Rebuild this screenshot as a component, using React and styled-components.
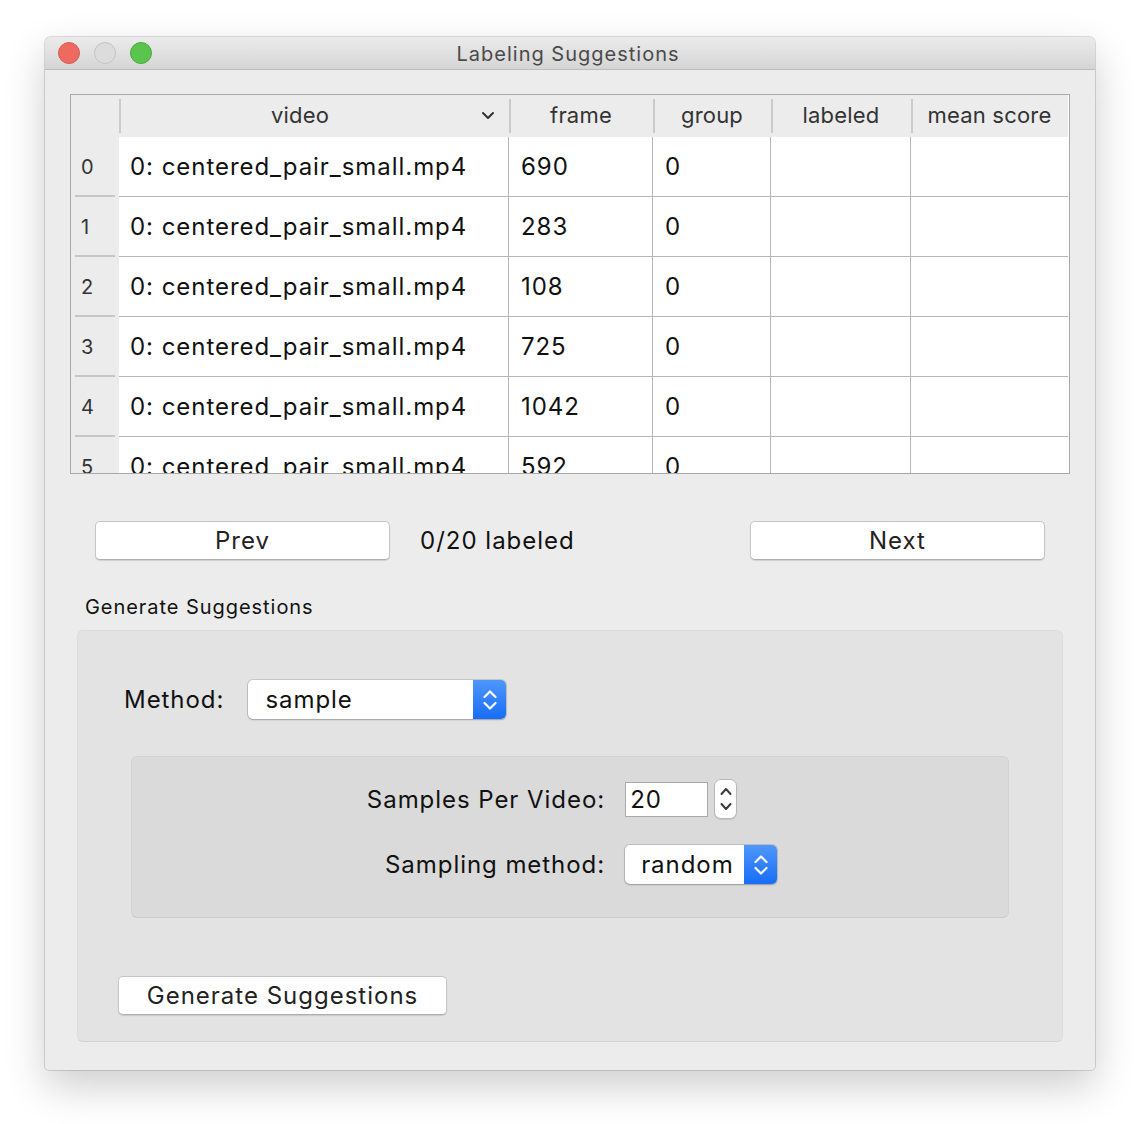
import React from 'react';
import styled, { createGlobalStyle } from 'styled-components';

const GlobalStyle = createGlobalStyle`
  html, body { margin: 0; padding: 0; background: #ffffff; }
  body { font-family: Inter, "Noto Sans", "Liberation Sans", sans-serif; color: #111; }
  * { box-sizing: border-box; }
`;

const Page = styled.div`
  width: 1140px;
  height: 1124px;
  padding: 37px 0 0 45px;
  background: #ffffff;
`;

const Window = styled.div`
  width: 1050px;
  height: 1033px;
  background: #ececec;
  border-radius: 6px 6px 4px 4px;
  box-shadow: 0 0 0 1px rgba(0, 0, 0, 0.13), 0 16px 40px rgba(0, 0, 0, 0.2);
  display: flex;
  flex-direction: column;
  overflow: hidden;
`;

const TitleBar = styled.div`
  flex: none;
  height: 33px;
  display: grid;
  grid-template-columns: 1fr auto 1fr;
  align-items: center;
  background: linear-gradient(#ebebeb, #d5d5d5);
  border-bottom: 1px solid #bcbcbc;
  padding: 0 13px;
`;

const Lights = styled.div`
  display: flex;
  gap: 14px;
`;

const Light = styled.span`
  width: 22px;
  height: 22px;
  border-radius: 50%;
  background: ${p => p.$bg};
  border: 1px solid ${p => p.$border};
`;

const Title = styled.div`
  font-size: 20px;
  color: #4a4a4a;
  letter-spacing: 1px;
  padding-top: 2px;
  padding-right: 4px;
`;

const Content = styled.div`
  flex: 1;
  display: flex;
  flex-direction: column;
  padding: 24px 25px 28px;
`;

const Table = styled.div`
  height: 380px;
  border: 1px solid #a8a8a8;
  background: #ffffff;
  overflow: hidden;
  display: grid;
  grid-template-columns: 48px 390px 144px 118px 140px 157px;
  grid-template-rows: 42px repeat(6, 60px);
`;

const Corner = styled.div`
  background: #ececec;
`;

const HeaderCell = styled.div`
  position: relative;
  background: #ececec;
  display: flex;
  align-items: center;
  justify-content: center;
  font-size: 22px;
  letter-spacing: 0.2px;
  color: #333;
  padding-right: ${p => (p.$sort ? '28px' : '0')};
  padding-bottom: 2px;
  &::before {
    content: '';
    position: absolute;
    left: 0;
    top: 4px;
    bottom: 4px;
    width: 2px;
    background: #cbcbcb;
  }
`;

const SortIcon = styled.svg`
  position: absolute;
  right: 14px;
  top: 16px;
`;

const RowHead = styled.div`
  position: relative;
  background: #ececec;
  display: flex;
  align-items: center;
  padding-left: 10px;
  font-size: 20px;
  color: #333;
  &::after {
    content: '';
    position: absolute;
    left: 4px;
    right: 4px;
    bottom: 0;
    height: 2px;
    background: #c6c6c6;
  }
`;

const Cell = styled.div`
  display: flex;
  align-items: center;
  padding-left: ${p => (p.$first ? '11px' : '12px')};
  font-size: 24px;
  letter-spacing: 0.95px;
  color: #111;
  border-bottom: 1px solid #b6b6b6;
  border-right: ${p => (p.$last ? 'none' : '1px solid #b6b6b6')};
  white-space: nowrap;
  overflow: hidden;
`;

const NavRow = styled.div`
  margin-top: 47px;
  display: grid;
  grid-template-columns: 295px 1fr 295px;
  column-gap: 30px;
  align-items: center;
  padding: 0 25px 0 25px;
`;

const PushButton = styled.button`
  height: 39px;
  width: ${p => p.$width || 'auto'};
  background: #ffffff;
  border: 1px solid #c6c6c6;
  border-bottom-color: #adadad;
  border-radius: 5px;
  box-shadow: 0 1px 1px rgba(0, 0, 0, 0.12);
  font-family: inherit;
  font-size: 24px;
  letter-spacing: 1px;
  color: #222;
  padding: 0;
`;

const Status = styled.div`
  font-size: 24px;
  letter-spacing: 1px;
  color: #111;
`;

const SectionTitle = styled.div`
  margin-top: 35px;
  padding-left: 15px;
  font-size: 20px;
  letter-spacing: 0.95px;
  line-height: 24px;
  color: #111;
`;

const GroupBox = styled.div`
  margin: 11px 7px 0;
  height: 412px;
  background: #e3e3e3;
  border: 1px solid #dcdcdc;
  border-bottom-color: #d3d3d3;
  border-radius: 6px;
  display: flex;
  flex-direction: column;
  align-items: flex-start;
  padding: 49px 53px 0 39px;
`;

const MethodRow = styled.div`
  display: flex;
  align-items: center;
  gap: 24px;
  padding-left: 7px;
`;

const Label = styled.span`
  font-size: 24px;
  letter-spacing: 0.95px;
  color: #111;
  text-align: right;
`;

const Combo = styled.div`
  width: ${p => p.$width};
  height: 39px;
  background: #ffffff;
  border-radius: 5px;
  box-shadow: 0 0 0 1px rgba(0, 0, 0, 0.12), 0 1px 2px rgba(0, 0, 0, 0.2);
  display: flex;
  align-items: stretch;
  overflow: hidden;
`;

const ComboText = styled.div`
  flex: 1;
  display: flex;
  align-items: center;
  padding-left: ${p => p.$pad || '17px'};
  font-size: 24px;
  letter-spacing: 0.95px;
  color: #111;
`;

const ComboArrow = styled.div`
  width: 33px;
  background: linear-gradient(#4e97fb, #176df6);
  display: flex;
  align-items: center;
  justify-content: center;
`;

const InnerBox = styled.div`
  align-self: stretch;
  margin: 37px 0 0 14px;
  height: 162px;
  background: #dadada;
  border: 1px solid #d3d3d3;
  border-bottom-color: #cbcbcb;
  border-radius: 6px;
  padding: 22px 0 0 4px;
  display: grid;
  grid-template-columns: auto auto;
  justify-content: center;
  align-content: start;
  align-items: center;
  column-gap: 20px;
  row-gap: 26px;
`;

const SpinWrap = styled.div`
  display: flex;
  align-items: center;
  gap: 6px;
`;

const SpinInput = styled.div`
  width: 83px;
  height: 35px;
  background: #ffffff;
  border: 1px solid #a9a9a9;
  display: flex;
  align-items: center;
  padding-left: 4px;
  font-size: 24px;
  letter-spacing: 0.95px;
  color: #111;
`;

const Stepper = styled.div`
  width: 23px;
  height: 40px;
  background: #ffffff;
  border: 1px solid #b8b8b8;
  border-radius: 7px;
  box-shadow: 0 1px 1px rgba(0, 0, 0, 0.1);
  display: flex;
  align-items: center;
  justify-content: center;
`;

const GenButtonWrap = styled.div`
  margin-top: 58px;
  padding-left: 1px;
`;

const ComboChevrons = () => (
  <svg width="14" height="24" viewBox="0 0 14 24" fill="none" stroke="#ffffff" strokeWidth="2.2" strokeLinecap="round" strokeLinejoin="round">
    <polyline points="1.5,9 7,3.5 12.5,9" />
    <polyline points="1.5,15 7,20.5 12.5,15" />
  </svg>
);

const StepperChevrons = () => (
  <svg width="12" height="26" viewBox="0 0 12 26" fill="none" stroke="#3a3a3a" strokeWidth="2" strokeLinecap="round" strokeLinejoin="round">
    <polyline points="1.5,8 6,3 10.5,8" />
    <polyline points="1.5,18 6,23 10.5,18" />
  </svg>
);

const rows = [
  ['0', '690'],
  ['1', '283'],
  ['2', '108'],
  ['3', '725'],
  ['4', '1042'],
  ['5', '592'],
];

export default function App() {
  return (
    <Page>
      <GlobalStyle />
      <Window>
        <TitleBar>
          <Lights>
            <Light $bg="#ee6a5f" $border="#d75a4f" />
            <Light $bg="#dcdcdc" $border="#c3c3c3" />
            <Light $bg="#5bc44f" $border="#46a93d" />
          </Lights>
          <Title>Labeling Suggestions</Title>
          <div />
        </TitleBar>
        <Content>
          <Table>
            <Corner />
            <HeaderCell $sort>
              video
              <SortIcon width="14" height="10" viewBox="0 0 14 10" fill="none" stroke="#333" strokeWidth="2" strokeLinecap="round" strokeLinejoin="round">
                <polyline points="2,2 7,7 12,2" />
              </SortIcon>
            </HeaderCell>
            <HeaderCell>frame</HeaderCell>
            <HeaderCell>group</HeaderCell>
            <HeaderCell>labeled</HeaderCell>
            <HeaderCell>mean score</HeaderCell>
            {rows.map(([i, frame]) => (
              <React.Fragment key={i}>
                <RowHead>{i}</RowHead>
                <Cell $first>0: centered_pair_small.mp4</Cell>
                <Cell>{frame}</Cell>
                <Cell>0</Cell>
                <Cell />
                <Cell $last />
              </React.Fragment>
            ))}
          </Table>

          <NavRow>
            <PushButton>Prev</PushButton>
            <Status>0/20 labeled</Status>
            <PushButton>Next</PushButton>
          </NavRow>

          <SectionTitle>Generate Suggestions</SectionTitle>
          <GroupBox>
            <MethodRow>
              <Label>Method:</Label>
              <Combo $width="258px">
                <ComboText>sample</ComboText>
                <ComboArrow><ComboChevrons /></ComboArrow>
              </Combo>
            </MethodRow>

            <InnerBox>
              <Label>Samples Per Video:</Label>
              <SpinWrap>
                <SpinInput>20</SpinInput>
                <Stepper><StepperChevrons /></Stepper>
              </SpinWrap>
              <Label>Sampling method:</Label>
              <Combo $width="152px">
                <ComboText $pad="16px">random</ComboText>
                <ComboArrow><ComboChevrons /></ComboArrow>
              </Combo>
            </InnerBox>

            <GenButtonWrap>
              <PushButton $width="329px">Generate Suggestions</PushButton>
            </GenButtonWrap>
          </GroupBox>
        </Content>
      </Window>
    </Page>
  );
}
